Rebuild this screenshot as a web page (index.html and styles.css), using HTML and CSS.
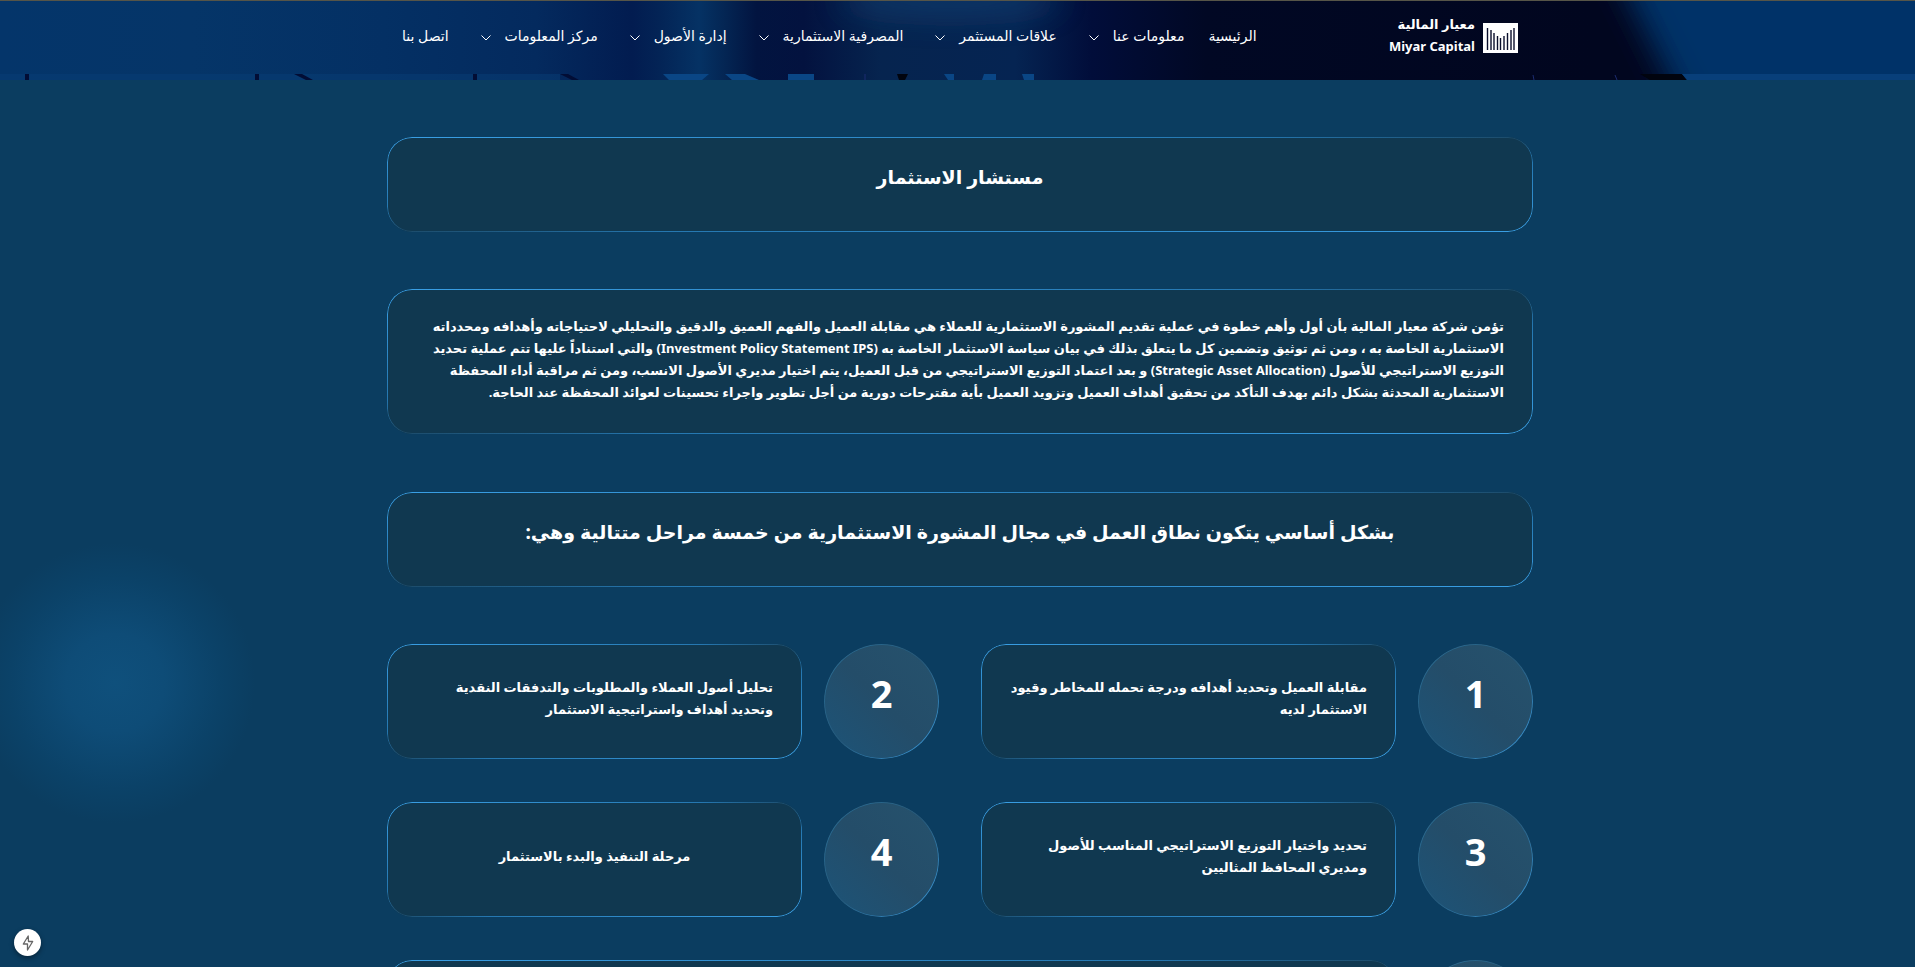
FILE: index.html
```html
<!DOCTYPE html>
<html lang="ar" dir="rtl">
<head>
<meta charset="utf-8">
<meta name="viewport" content="width=device-width, initial-scale=1">
<title>مستشار الاستثمار</title>
<link rel="stylesheet" href="styles.css">
</head>
<body>
<header class="header">
  <svg class="header-art" viewBox="0 0 1915 80" preserveAspectRatio="none" aria-hidden="true">
    <defs>
      <linearGradient id="sky" x1="0" x2="1" y1="0" y2="0">
        <stop offset="0" stop-color="#04356a"/>
        <stop offset=".1" stop-color="#053568"/>
        <stop offset=".2" stop-color="#043064"/>
        <stop offset=".28" stop-color="#042a5e"/>
        <stop offset=".33" stop-color="#021c50"/>
        <stop offset=".345" stop-color="#032456"/>
        <stop offset=".365" stop-color="#053264"/>
        <stop offset=".378" stop-color="#042654"/>
        <stop offset=".395" stop-color="#021440"/>
        <stop offset=".42" stop-color="#03123f"/>
        <stop offset=".46" stop-color="#06244f"/>
        <stop offset=".53" stop-color="#052452"/>
        <stop offset=".57" stop-color="#010d3a"/>
        <stop offset=".63" stop-color="#010824"/>
        <stop offset=".83" stop-color="#01061f"/>
        <stop offset="1" stop-color="#01061f"/>
      </linearGradient>
      <filter id="soft" filterUnits="userSpaceOnUse" x="700" y="-100" width="1400" height="300"><feGaussianBlur stdDeviation="15"/></filter>
    </defs>
    <rect width="1915" height="80" fill="url(#sky)"/>
    <path d="M1600-60H2040V140H1700Z" fill="#053368" filter="url(#soft)"/>
    <ellipse cx="950" cy="0" rx="110" ry="16" fill="#153f72" opacity=".7" filter="url(#soft)"/>
    <path d="M0 74H560V80H0Z" fill="#083d75" opacity=".5"/>
    <path d="M25 74h4v6h-4zM255 74h4v6h-4zM473 74h4v6h-4zM294 74h8l11 6h-7zM560 74h8l11 6h-7z" fill="#020d35"/>
    <path d="M663 74h46l-7 6h-33zM725 74h20l14 6h-27zM788 74h26v6h-26zM944 74h10v6h-6zM984 74h12v6h-14zM1022 74h12v6h-10z" fill="#0a4685"/>
    <path d="M897 74h11l-3 6h-6zM1640 74h42l5 6h-37z" fill="#01040f"/>
    <path d="M1682 74H1915V80H1687Z" fill="#083f7a"/>
    <path d="M1533 75l1 5M1615 75l2 5M865 74v6" stroke="#1c2c70"/>
    <path d="M0 .5H1915" stroke="#565548"/>
  </svg>
  <div class="bar">
    <a class="brand" href="#">
      <svg class="brand-mark" viewBox="0 0 35 30" aria-hidden="true">
        <path fill="#fff" d="M0 0h35v30H0z"/>
        <path stroke="#0a0f2c" stroke-width="1.4" d="M4.5 5v22M8 7v20M11 10v17M14.5 13v14M17.500 15v12M21 13v14M24.500 10v17M28 7v20M31 5v22"/>
      </svg>
      <span class="brand-name"><span>معيار المالية</span><span>Miyar Capital</span></span>
    </a>
    <nav class="nav" aria-label="القائمة الرئيسية">
      <a class="nav-link" href="#">الرئيسية</a>
      <a class="nav-link" href="#">معلومات عنا<svg class="chevron" viewBox="0 0 10 6" aria-hidden="true"><path d="M.5.5 5 5 9.500.5"/></svg></a>
      <a class="nav-link" href="#">علاقات المستثمر<svg class="chevron" viewBox="0 0 10 6" aria-hidden="true"><path d="M.5.5 5 5 9.500.5"/></svg></a>
      <a class="nav-link" href="#">المصرفية الاستثمارية<svg class="chevron" viewBox="0 0 10 6" aria-hidden="true"><path d="M.5.5 5 5 9.500.5"/></svg></a>
      <a class="nav-link" href="#">إدارة الأصول<svg class="chevron" viewBox="0 0 10 6" aria-hidden="true"><path d="M.5.5 5 5 9.500.5"/></svg></a>
      <a class="nav-link" href="#">مركز المعلومات<svg class="chevron" viewBox="0 0 10 6" aria-hidden="true"><path d="M.5.5 5 5 9.500.5"/></svg></a>
      <a class="nav-link" href="#">اتصل بنا</a>
    </nav>
  </div>
</header>

<main class="page">
  <section class="card banner"><h1 class="title">مستشار الاستثمار</h1></section>

  <section class="card intro">
    <p>تؤمن شركة معيار المالية بأن أول وأهم خطوة في عملية تقديم المشورة الاستثمارية للعملاء هي مقابلة العميل والفهم العميق والدقيق والتحليلي لاحتياجاته وأهدافه ومحدداته<br>
    الاستثمارية الخاصة به ، ومن ثم توثيق وتضمين كل ما يتعلق بذلك في بيان سياسة الاستثمار الخاصة به (Investment Policy Statement IPS) والتي استناداً عليها تتم عملية تحديد<br>
    التوزيع الاستراتيجي للأصول (Strategic Asset Allocation) و بعد اعتماد التوزيع الاستراتيجي من قبل العميل، يتم اختيار مديري الأصول الانسب، ومن ثم مراقبة أداء المحفظة<br>
    الاستثمارية المحدثة بشكل دائم بهدف التأكد من تحقيق أهداف العميل وتزويد العميل بأية مقترحات دورية من أجل تطوير واجراء تحسينات لعوائد المحفظة عند الحاجة.</p>
  </section>

  <section class="card banner"><h2 class="title">بشكل أساسي يتكون نطاق العمل في مجال المشورة الاستثمارية من خمسة مراحل متتالية وهي:</h2></section>

  <section class="steps">
    <article class="step">
      <div class="number">1</div>
      <div class="card step-card"><p class="step-text">مقابلة العميل وتحديد أهدافه ودرجة تحمله للمخاطر وقيود<br>الاستثمار لديه</p></div>
    </article>
    <article class="step">
      <div class="number">2</div>
      <div class="card step-card"><p class="step-text">تحليل أصول العملاء والمطلوبات والتدفقات النقدية<br>وتحديد أهداف واستراتيجية الاستثمار</p></div>
    </article>
    <article class="step">
      <div class="number">3</div>
      <div class="card step-card"><p class="step-text">تحديد واختيار التوزيع الاستراتيجي المناسب للأصول<br>ومديري المحافظ المثاليين</p></div>
    </article>
    <article class="step">
      <div class="number">4</div>
      <div class="card step-card"><p>مرحلة التنفيذ والبدء بالاستثمار</p></div>
    </article>
    <article class="step step-wide">
      <div class="number"></div>
      <div class="card step-card"></div>
    </article>
  </section>
</main>

<button class="badge" type="button" aria-label="أدوات سريعة">
  <svg viewBox="0 0 12 16" aria-hidden="true"><path d="M6.200 1 1.300 9H5.500V15L10.700 6.500H6.500Z"/></svg>
</button>
</body>
</html>
```

FILE: styles.css
```css
* {
  box-sizing: border-box;
}

html,
body {
  height: 100%;
}

body {
  margin: 0;
  overflow: hidden;
  color: #fff;
  background: radial-gradient(circle 140px at 115px 683px, #0f507c 0, #0e4c77 35%, #0b4268 75%, #0b3d60 100%) #0b3d60;
  font-family: "Noto Sans", "DejaVu Sans", sans-serif;
  font-size: 13px;
  line-height: 22px;
}

h1,
h2,
p {
  margin: 0;
}

a {
  color: inherit;
  text-decoration: none;
}

.header {
  position: relative;
  height: 80px;
  padding-left: 5px;
}

.header-art {
  position: absolute;
  inset: 0;
  width: 100%;
  height: 100%;
}

.bar {
  position: relative;
  display: flex;
  align-items: flex-start;
  justify-content: space-between;
  max-width: 1146px;
  margin: 0 auto;
  padding: 0 15px 0 3px;
}

.brand {
  display: flex;
  gap: 8px;
  padding-top: 13px;
}

.brand-mark {
  width: 35px;
  height: 30px;
  margin-top: 10px;
}

.brand-name {
  display: flex;
  flex-direction: column;
  font-weight: 700;
  white-space: nowrap;
}

.nav {
  display: flex;
  padding-top: 25px;
}

.nav-link {
  display: flex;
  align-items: center;
  padding: 0 12px;
  font-size: 14px;
  white-space: nowrap;
}

.chevron {
  width: 10px;
  height: 6px;
  margin: 3px 14px 0 8px;
  fill: none;
  stroke: #fff;
}

.page {
  max-width: 1151px;
  margin: 0 auto;
  padding: 57px 0 0 5px;
}

.card {
  position: relative;
  border-radius: 25px;
  background: #103850;
}

.card::before,
.number::before {
  content: "";
  position: absolute;
  inset: 0;
  padding: 1px;
  border-radius: inherit;
  background: linear-gradient(to bottom right, #3aa0e6, #2577b0 38%, #1c4a68 50%, #2577b0 62%, #3aa0e6);
  -webkit-mask: linear-gradient(#000 0 0) content-box exclude, linear-gradient(#000 0 0);
  mask: linear-gradient(#000 0 0) content-box exclude, linear-gradient(#000 0 0);
}

.banner {
  margin-bottom: 57px;
  padding: 25px 29px 40px;
}

.title {
  font-size: 19px;
  line-height: 30px;
  text-align: center;
  white-space: nowrap;
}

.intro {
  margin-bottom: 58px;
  padding: 26px 29px 31px;
  font-weight: 700;
  white-space: nowrap;
}

.steps {
  display: grid;
  grid-template-columns: 1fr 1fr;
  gap: 43px 42px;
}

.step {
  display: flex;
  gap: 22px;
}

.step-wide {
  grid-column: 1 / -1;
}

.number {
  position: relative;
  flex: none;
  width: 115px;
  height: 115px;
  padding-top: 26px;
  border-radius: 50%;
  background: linear-gradient(to bottom left, #26526d, #244d69 50%, #1c5479);
  font-size: 38px;
  font-weight: 700;
  line-height: 46px;
  text-align: center;
}

.number::before {
  background: linear-gradient(to bottom right, #2a7099, #24587a 50%, #3aa0e6);
}

.step-card {
  display: flex;
  flex: 1;
  align-items: center;
  justify-content: center;
  padding: 0 29px 8px;
  font-weight: 700;
  white-space: nowrap;
}

.step-text {
  flex: 1;
}

.badge {
  position: fixed;
  left: 14px;
  bottom: 11px;
  display: grid;
  place-items: center;
  width: 27px;
  height: 27px;
  padding: 0;
  border: 0;
  border-radius: 50%;
  background: #fff;
  box-shadow: 0 2px 5px #0006;
}

.badge svg {
  width: 12px;
  height: 16px;
  fill: none;
  stroke: #666;
  stroke-width: 1.3;
  stroke-linejoin: round;
}
```
